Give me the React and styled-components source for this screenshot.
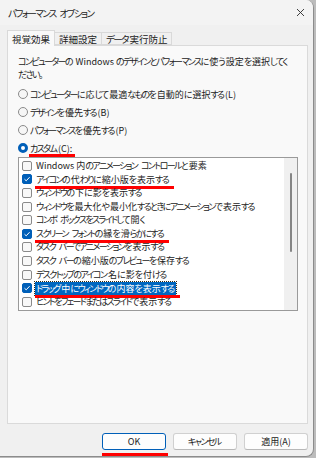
import React from "react"
import styled, { createGlobalStyle } from "styled-components"

const GlobalStyle = createGlobalStyle`
  html, body {
    margin: 0;
    padding: 0;
    background: #bcbcbc;
  }
  body {
    font-family: "Noto Sans CJK JP", sans-serif;
    font-size: 9px;
    color: #222;
  }
  * {
    box-sizing: border-box;
  }
`

// kana in the Windows UI font is much narrower than in Noto, so kana runs get squeezed
const Kana = styled.span`
  letter-spacing: -1.6px;
  margin-right: 1.6px;
`

function Jp({ text }) {
  const parts = text.split(/([\u3040-\u30ff\u3001\u3002]+)/)
  return parts.map((p, i) =>
    /^[\u3040-\u30ff\u3001\u3002]+$/.test(p) ? <Kana key={i}>{p}</Kana> : p
  )
}

const Window = styled.div`
  width: 314px;
  height: 457px;
  background: #f0f0f0;
  border-right: 1px solid #8c8c8c;
  border-bottom: 1px solid #8c8c8c;
  border-radius: 0 8px 8px 0;
  display: flex;
  flex-direction: column;
  overflow: hidden;
  font-family: "Noto Sans CJK JP", sans-serif;
  font-feature-settings: "palt";
`

const TitleBar = styled.div`
  height: 25px;
  display: flex;
  align-items: center;
  justify-content: space-between;
  padding: 0 6px 0 8px;
  background: #f3f3f3;
`

const Title = styled.span`
  font-size: 9.5px;
`

const CloseButton = styled.div`
  width: 14px;
  height: 14px;
  display: flex;
  align-items: center;
  justify-content: center;
`

const TabStrip = styled.div`
  height: 20px;
  display: flex;
  align-items: flex-end;
  padding-left: 7px;
`

const Tab = styled.div`
  height: ${(p) => (p.$active ? "16px" : "13px")};
  padding: 0 4px;
  display: flex;
  align-items: center;
  font-size: 9.5px;
  background: ${(p) => (p.$active ? "#f9f9f9" : "#f0f0f0")};
  border: 1px solid #d9d9d9;
  border-bottom: ${(p) => (p.$active ? "none" : "1px solid #d9d9d9")};
  margin-bottom: ${(p) => (p.$active ? "-1px" : "0")};
  margin-left: ${(p) => (p.$active ? "0" : "-1px")};
  position: relative;
  z-index: ${(p) => (p.$active ? 2 : 1)};
`

const Panel = styled.div`
  height: 379px;
  margin: 0 5px 0 7px;
  background: #f9f9f9;
  border: 1px solid #dadada;
  padding: 9px 10px 0 10px;
  display: flex;
  flex-direction: column;
`

const Description = styled.p`
  margin: 0;
  line-height: 13px;
  padding-right: 5px;
`

const RadioGroup = styled.div`
  margin-top: 4px;
  display: flex;
  flex-direction: column;
`

const RadioRow = styled.label`
  height: 18px;
  display: flex;
  align-items: center;
  gap: 2px;
`

const RadioCircle = styled.span`
  width: 10px;
  height: 10px;
  border-radius: 50%;
  flex-shrink: 0;
  background: ${(p) => (p.$checked ? "#ffffff" : "#f6f6f6")};
  border: ${(p) => (p.$checked ? "3px solid #005fb8" : "1px solid #8a8a8a")};
`

const ListBox = styled.div`
  width: 280px;
  height: 154px;
  border: 1px solid #9a9a9a;
  background: #ffffff;
  display: flex;
`

const Items = styled.div`
  flex: 1;
  padding-top: 1px;
  display: flex;
  flex-direction: column;
`

const ItemRow = styled.div`
  height: 13.6px;
  display: flex;
  align-items: center;
  gap: 4px;
  padding-left: 3px;
  white-space: nowrap;
`

const CheckBox = styled.span`
  width: 10px;
  height: 10px;
  flex-shrink: 0;
  border-radius: 2px;
  display: flex;
  align-items: center;
  justify-content: center;
  background: ${(p) => (p.$checked ? "#005fb8" : "#f8f8f8")};
  border: 1px solid ${(p) => (p.$checked ? "#005fb8" : "#8a8a8a")};
`

const ItemText = styled.span`
  position: relative;
  padding: 0 1px;
  margin-left: -1px;
  line-height: 12px;
  background: ${(p) => (p.$selected ? "#0067c0" : "transparent")};
  color: ${(p) => (p.$selected ? "#ffffff" : "inherit")};
  outline: ${(p) => (p.$selected ? "1px dotted #3a2a10" : "none")};
`

const Mark = styled.span`
  position: relative;
  &::after {
    content: "";
    position: absolute;
    left: ${(p) => p.$left || "-1px"};
    right: ${(p) => p.$right || "-3px"};
    bottom: ${(p) => p.$bottom || "-3px"};
    height: 3px;
    background: #ff0000;
  }
`

const ScrollTrack = styled.div`
  width: 13px;
  background: #f0f0f0;
  display: flex;
  justify-content: center;
`

const ScrollThumb = styled.div`
  width: 2px;
  height: 79px;
  margin-top: 15px;
  border-radius: 1px;
  background: #858585;
`

const ButtonRow = styled.div`
  display: flex;
  justify-content: flex-end;
  gap: 7px;
  padding: 9px 5px 0 0;
`

const Button = styled.button`
  position: relative;
  width: 64px;
  height: 17px;
  padding: 0;
  font-family: "Noto Sans CJK JP", sans-serif;
  font-feature-settings: "palt";
  font-size: 9px;
  color: #222;
  background: #fdfdfd;
  border: 1px solid ${(p) => (p.$primary ? "#005fb8" : "#d0d0d0")};
  border-bottom-color: ${(p) => (p.$primary ? "#005fb8" : "#b8b8b8")};
  border-radius: 3px;
  ${(p) =>
    p.$marked &&
    `
    &::after {
      content: "";
      position: absolute;
      left: -1px;
      right: -3px;
      bottom: -7px;
      height: 3px;
      background: #ff0000;
    }
  `}
`

const radios = [
  { label: "コンピューターに応じて最適なものを自動的に選択する(L)" },
  { label: "デザインを優先する(B)" },
  { label: "パフォーマンスを優先する(P)" },
  { label: "カスタム(C):", checked: true, marked: true },
]

const items = [
  { label: "Windows 内のアニメーション コントロールと要素" },
  { label: "アイコンの代わりに縮小版を表示する", checked: true, marked: true },
  { label: "ウィンドウの下に影を表示する" },
  { label: "ウィンドウを最大化や最小化するときにアニメーションで表示する" },
  { label: "コンボ ボックスをスライドして開く" },
  { label: "スクリーン フォントの縁を滑らかにする", checked: true, marked: true },
  { label: "タスク バーでアニメーションを表示する" },
  { label: "タスク バーの縮小版のプレビューを保存する" },
  { label: "デスクトップのアイコン名に影を付ける" },
  { label: "ドラッグ中にウィンドウの内容を表示する", checked: true, marked: true, selected: true },
  { label: "ヒントをフェードまたはスライドで表示する" },
]

function Check() {
  return (
    <svg width="8" height="8" viewBox="0 0 8 8">
      <path d="M1.5 4.2 L3.2 5.8 L6.6 2.2" fill="none" stroke="#ffffff" strokeWidth="1" />
    </svg>
  )
}

export default function App() {
  return (
    <>
      <GlobalStyle />
      <Window>
        <TitleBar>
          <Title>
            <Jp text="パフォーマンス オプション" />
          </Title>
          <CloseButton>
            <svg width="9" height="9" viewBox="0 0 9 9">
              <path d="M1 1 L8 8 M8 1 L1 8" stroke="#2b2b2b" strokeWidth="0.9" />
            </svg>
          </CloseButton>
        </TitleBar>

        <TabStrip>
          <Tab $active>視覚効果</Tab>
          <Tab>詳細設定</Tab>
          <Tab>
            <Jp text="データ実行防止" />
          </Tab>
        </TabStrip>

        <Panel>
          <Description>
            <Jp text="コンピューターの Windows のデザインとパフォーマンスに使う設定を選択してください。" />
          </Description>

          <RadioGroup>
            {radios.map((r) => (
              <RadioRow key={r.label}>
                <RadioCircle $checked={r.checked} />
                {r.marked ? (
                  <Mark $bottom="-2px">
                    <Jp text={r.label} />
                  </Mark>
                ) : (
                  <span>
                    <Jp text={r.label} />
                  </span>
                )}
              </RadioRow>
            ))}
          </RadioGroup>

          <ListBox>
            <Items>
              {items.map((it) => (
                <ItemRow key={it.label}>
                  <CheckBox $checked={it.checked}>{it.checked && <Check />}</CheckBox>
                  {it.marked ? (
                    <Mark $bottom="-3px" $right={it.selected ? "-4px" : "-3px"}>
                      <ItemText $selected={it.selected}>
                        <Jp text={it.label} />
                      </ItemText>
                    </Mark>
                  ) : (
                    <ItemText>
                      <Jp text={it.label} />
                    </ItemText>
                  )}
                </ItemRow>
              ))}
            </Items>
            <ScrollTrack>
              <ScrollThumb />
            </ScrollTrack>
          </ListBox>
        </Panel>

        <ButtonRow>
          <Button $primary $marked>OK</Button>
          <Button>
            <Jp text="キャンセル" />
          </Button>
          <Button>
            <Jp text="適用(A)" />
          </Button>
        </ButtonRow>
      </Window>
    </>
  )
}
